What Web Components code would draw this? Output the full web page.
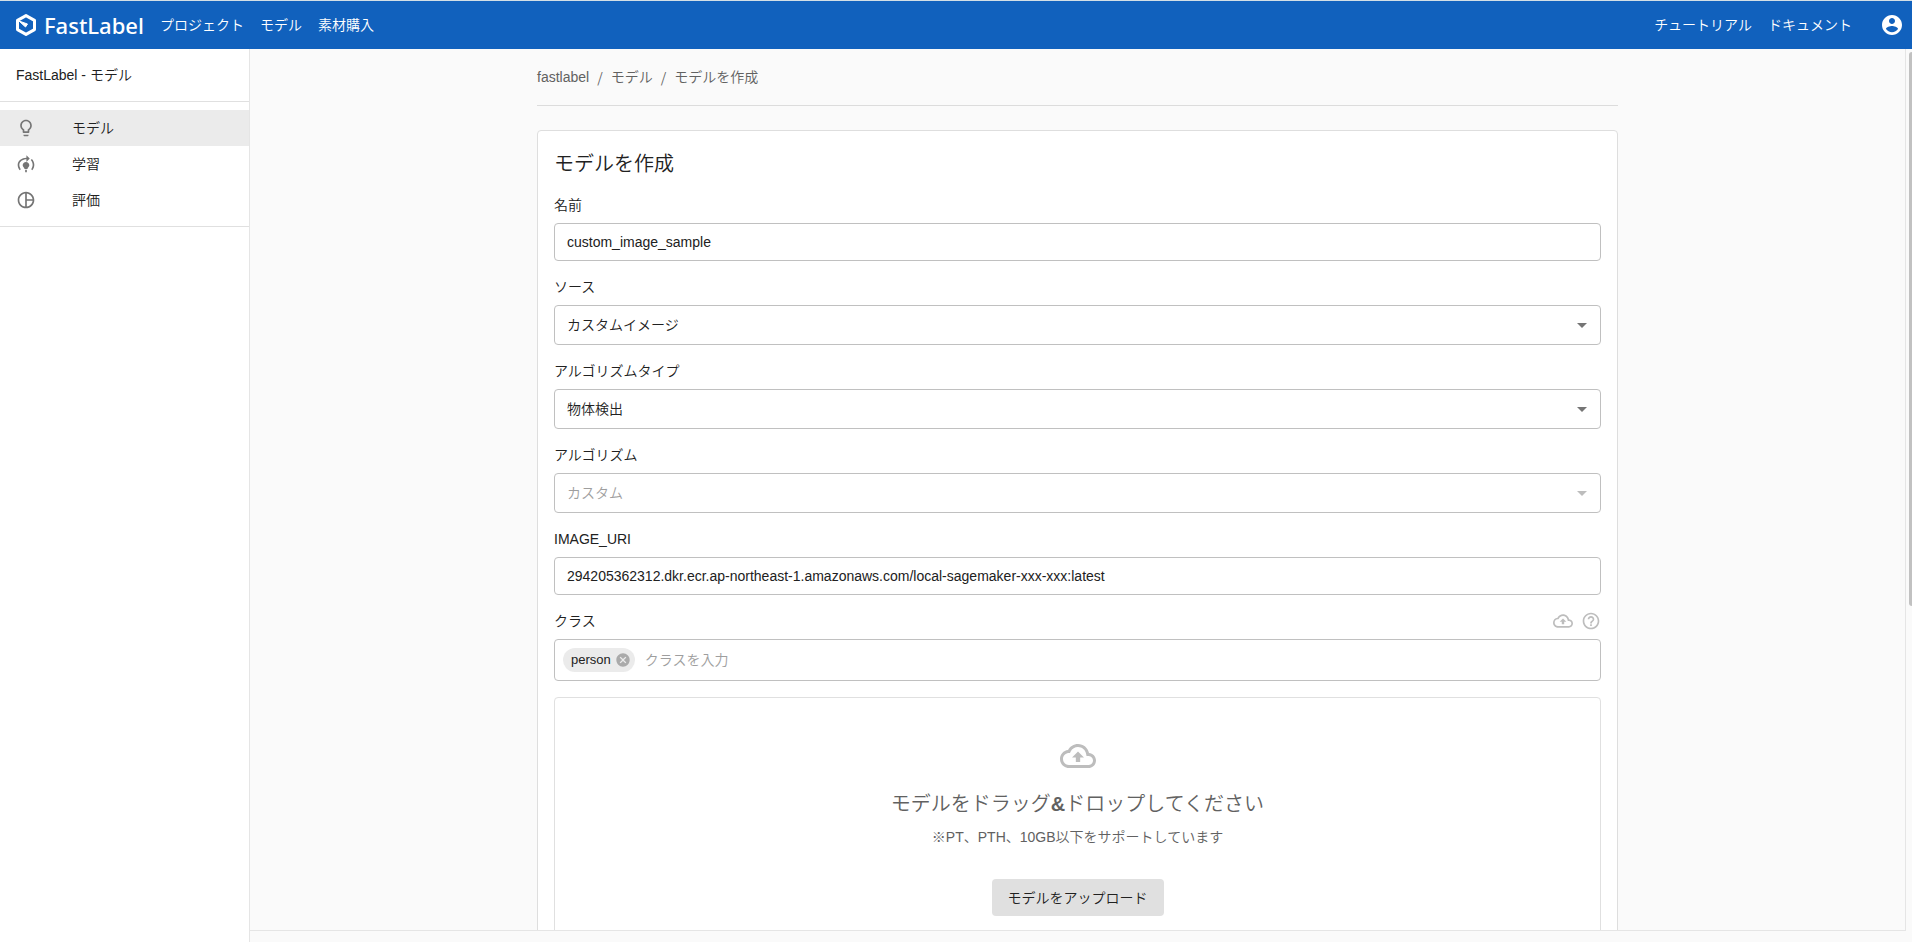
<!DOCTYPE html>
<html lang="ja">
<head>
<meta charset="utf-8">
<title>FastLabel - モデル</title>
<style>
html, body { height: 100%; margin: 0; }
body {
  background: #fafafa;
  color: #212121;
  font: 350 14px/20px "Liberation Sans", "Noto Sans CJK JP", sans-serif;
  overflow: hidden;
}
</style>
</head>
<body>
<fl-app></fl-app>
<script>
const define = (name, html, setup) => {
  const template = document.createElement('template');
  template.innerHTML = html;
  customElements.define(name, class extends HTMLElement {
    connectedCallback() {
      if (this.shadowRoot) return;
      this.attachShadow({ mode: 'open' }).append(template.content.cloneNode(true));
      if (setup) setup(this, this.shadowRoot);
    }
  });
};

const ICONS = {
  bulb: 'M9 21c0 .55.45 1 1 1h4c.55 0 1-.45 1-1v-1H9v1zm3-19C8.14 2 5 5.14 5 9c0 2.38 1.19 4.47 3 5.74V17c0 .55.45 1 1 1h6c.55 0 1-.45 1-1v-2.26c1.81-1.27 3-3.36 3-5.74 0-3.86-3.14-7-7-7zm2.85 11.1l-.85.6V16h-4v-2.3l-.85-.6C7.8 12.16 7 10.63 7 9c0-2.76 2.24-5 5-5s5 2.24 5 5c0 1.63-.8 3.16-2.15 4.1z',
  training: 'M16 13.500c0 2-2.200 3-2.200 4.500h-3.600c0-1.500-2.200-2.500-2.200-4.500 0-2.210 1.790-4 4-4s4 1.790 4 4zm-3 5.500h-2v3h2v-3zm7-6c0 2-.700 3.800-1.800 5.200l1.400 1.400c1.500-1.800 2.400-4.100 2.400-6.600 0-2.800-1.100-5.300-2.900-7.100l-1.400 1.400C19.100 8.800 20 10.800 20 13zM16.500 5.500l-4-4v3C7 4.500 2 8.200 2 13c0 2.500.900 4.800 2.400 6.600l1.400-1.400C4.700 16.800 4 15 4 13c0-3.900 4-6.700 8.500-6.700v3.200l4-4z',
  pie: 'M12 2C6.480 2 2 6.480 2 12s4.480 10 10 10 10-4.480 10-10S17.520 2 12 2zm1 2.070c3.610.450 6.480 3.330 6.930 6.930H13V4.070zM4 12c0-4.060 3.070-7.440 7-7.930v15.870c-3.930-.500-7-3.880-7-7.940zm9 7.930V13h6.930c-.450 3.610-3.320 6.480-6.930 6.930z',
  cloud: 'M19.350 10.040C18.670 6.590 15.640 4 12 4 9.110 4 6.600 5.640 5.350 8.040 2.340 8.360 0 10.910 0 14c0 3.310 2.690 6 6 6h13c2.760 0 5-2.240 5-5 0-2.640-2.050-4.780-4.650-4.960zM19 18H6c-2.210 0-4-1.790-4-4 0-2.050 1.530-3.760 3.560-3.970l1.070-.110.500-.950C8.080 7.140 9.940 6 12 6c2.620 0 4.880 1.860 5.390 4.430l.300 1.500 1.530.110c1.560.100 2.780 1.410 2.780 2.960 0 1.650-1.350 3-3 3zM8 13h2.550v3h2.900v-3H16l-4-4z',
  help: 'M11 18h2v-2h-2v2zm1-16C6.480 2 2 6.480 2 12s4.480 10 10 10 10-4.480 10-10S17.520 2 12 2zm0 18c-4.410 0-8-3.590-8-8s3.590-8 8-8 8 3.590 8 8-3.590 8-8 8zm0-14c-2.210 0-4 1.790-4 4h2c0-1.100.900-2 2-2s2 .900 2 2c0 2-3 1.750-3 5h2c0-2.250 3-2.500 3-5 0-2.210-1.790-4-4-4z',
  cancel: 'M12 2C6.470 2 2 6.470 2 12s4.470 10 10 10 10-4.470 10-10S17.530 2 12 2zm5 13.590L15.590 17 12 13.410 8.410 17 7 15.590 10.590 12 7 8.410 8.410 7 12 10.590 15.590 7 17 8.410 13.410 12 17 15.590z',
  account: 'M12 2C6.480 2 2 6.480 2 12s4.480 10 10 10 10-4.480 10-10S17.520 2 12 2zm0 3c1.660 0 3 1.340 3 3s-1.340 3-3 3-3-1.340-3-3 1.340-3 3-3zm0 14.200c-2.500 0-4.710-1.280-6-3.220.030-1.990 4-3.080 6-3.080 1.990 0 5.970 1.090 6 3.080-1.290 1.940-3.500 3.220-6 3.220z',
  arrow: 'M7 10l5 5 5-5z'
};

define('fl-icon', `
<style>
:host { display: block; flex: none; width: var(--size, 20px); height: var(--size, 20px); }
svg { display: block; width: 100%; height: 100%; fill: currentColor; }
</style>
<svg viewBox="0 0 24 24" aria-hidden="true"><path/></svg>`,
(host, root) => root.querySelector('path').setAttribute('d', ICONS[host.getAttribute('name')]));

define('fl-header', `
<style>
:host {
  display: flex; align-items: center; box-sizing: border-box; height: 49px; flex: none;
  padding: 0 8px 0 14px; background: #1161bd; border-top: 1px solid #d3dfe6; color: #fff;
}
.brand { display: flex; align-items: center; gap: 6px; width: 146px; color: #fff; text-decoration: none;
  font: 500 22px/24px "Noto Sans", sans-serif; }
.brand svg { width: 24px; height: 24px; flex: none; }
nav { display: flex; gap: 16px; }
nav a { color: #fff; text-decoration: none; }
.right { margin-left: auto; margin-right: 28px; }
button { all: unset; --size: 24px; cursor: pointer; }
</style>
<a class="brand" href="#" aria-label="FastLabel">
  <svg viewBox="0 0 24 24" fill="none" stroke="#fff"><path stroke-width="3" stroke-linejoin="round" d="M12 2.600l8.500 4.800v9.200L12 21.400l-8.500-4.800V7.400z"/><path fill="#fff" stroke-width="1" stroke-linejoin="round" d="M5 8l8.500 3-2 3z"/></svg>
  <span>FastLabel</span>
</a>
<nav><a href="#">プロジェクト</a><a href="#">モデル</a><a href="#">素材購入</a></nav>
<nav class="right"><a href="#">チュートリアル</a><a href="#">ドキュメント</a></nav>
<button aria-label="アカウント"><fl-icon name="account"></fl-icon></button>`);

define('fl-nav-item', `
<style>
:host { display: block; }
a { display: flex; align-items: center; gap: 36px; height: 36px; padding: 0 16px; color: #212121; text-decoration: none; }
:host([selected]) a { background: #ebebeb; }
fl-icon { color: #757575; }
</style>
<a href="#"><fl-icon></fl-icon><slot></slot></a>`,
(host, root) => {
  const old = root.querySelector('fl-icon'), icon = document.createElement('fl-icon');
  icon.setAttribute('name', host.getAttribute('icon'));
  old.replaceWith(icon);
});

define('fl-sidebar', `
<style>
:host { display: block; box-sizing: border-box; width: 250px; flex: none; background: #fff; border-right: 1px solid #e5e5e5; }
header { padding: 16px; border-bottom: 1px solid #e0e0e0; }
nav { padding: 8px 0; border-bottom: 1px solid #e0e0e0; }
</style>
<header><slot name="title"></slot></header>
<nav><slot></slot></nav>`);

define('fl-breadcrumb', `
<style>
:host { display: block; padding: 16px 0; border-bottom: 1px solid #dcdcdc; color: #616161; }
nav { display: flex; gap: 8px; line-height: 24px; }
a { color: inherit; text-decoration: none; }
i { font-style: normal; font-family: "Noto Sans CJK JP", sans-serif; }
</style>
<nav aria-label="パンくず"><a href="#">fastlabel</a><i>/</i><a href="#">モデル</a><i>/</i><span>モデルを作成</span></nav>`);

const FIELD = `
:host { display: block; }
label { display: block; margin-bottom: 8px; }
.box { box-sizing: border-box; width: 100%; border: 1px solid #c0c0c0; border-radius: 4px; background: #fff; }
input, select { font: inherit; color: inherit; outline: none; margin: 0; }
`;

define('fl-text-field', `
<style>${FIELD}
input { display: block; height: 38px; padding: 0 12px; }
</style>
<label for="control"></label>
<input id="control" class="box" type="text">`,
(host, root) => {
  root.querySelector('label').textContent = host.getAttribute('label');
  root.querySelector('input').value = host.getAttribute('value');
});

define('fl-select-field', `
<style>${FIELD}
.wrap { display: grid; align-items: center; }
.wrap > * { grid-area: 1 / 1; }
select { appearance: none; height: 40px; padding: 0 32px 0 12px; }
select:disabled { color: #9e9e9e; opacity: 1; }
fl-icon { --size: 24px; justify-self: end; margin-right: 7px; color: #757575; pointer-events: none; }
:host([disabled]) fl-icon { color: #bdbdbd; }
</style>
<label for="control"></label>
<div class="wrap"><select id="control" class="box"><option></option></select><fl-icon name="arrow"></fl-icon></div>`,
(host, root) => {
  root.querySelector('label').textContent = host.getAttribute('label');
  root.querySelector('option').textContent = host.getAttribute('value');
  root.querySelector('select').disabled = host.hasAttribute('disabled');
});

define('fl-chip', `
<style>
:host { display: flex; align-items: center; gap: 4px; height: 24px; padding: 0 4px 0 8px; border-radius: 12px; background: #ebebeb; font-size: 13px; }
button { all: unset; --size: 16px; color: #aaa; cursor: pointer; }
</style>
<slot></slot><button aria-label="削除"><fl-icon name="cancel"></fl-icon></button>`);

define('fl-class-field', `
<style>${FIELD}
.head { display: flex; align-items: center; gap: 8px; margin-bottom: 8px; color: #bdbdbd; }
label { margin: 0 auto 0 0; color: #212121; }
.head button { all: unset; cursor: pointer; }
.box { display: flex; align-items: center; gap: 10px; padding: 8px; }
input { flex: 1; min-width: 0; height: 24px; padding: 0; border: 0; background: none; }
input::placeholder { color: #9e9e9e; opacity: 1; }
</style>
<div class="head"><label for="control">クラス</label>
<button aria-label="アップロード"><fl-icon name="cloud"></fl-icon></button>
<button aria-label="ヘルプ"><fl-icon name="help"></fl-icon></button></div>
<div class="box"><fl-chip>person</fl-chip><input id="control" type="text" placeholder="クラスを入力"></div>`);

define('fl-dropzone', `
<style>
:host { display: flex; flex-direction: column; align-items: center; padding: 40px 16px; border: 1px solid #e0e0e0; border-radius: 4px; color: #616161; }
fl-icon { --size: 36px; color: #bdbdbd; }
h2 { margin: 14px 0 7px; font-size: 20px; line-height: 32px; font-weight: 350; }
b { font-weight: 700; }
p { margin: 0 0 32px; }
button { height: 37px; padding: 0 16px; border: 0; border-radius: 4px; background: #e0e0e0; color: #212121; font: inherit; cursor: pointer; }
</style>
<fl-icon name="cloud"></fl-icon>
<h2>モデルをドラッグ<b>&amp;</b>ドロップしてください</h2>
<p>※PT、PTH、10GB以下をサポートしています</p>
<button>モデルをアップロード</button>`);

define('fl-card', `
<style>
:host { display: flex; flex-direction: column; gap: 16px; margin-top: 24px; padding: 18px 16px 16px; border: 1px solid #dedede; border-radius: 4px; background: #fff; }
h1 { margin: 0; font-size: 20px; line-height: 30px; font-weight: 350; }
</style>
<h1><slot name="title"></slot></h1><slot></slot>`);

define('fl-scrollbar', `
<style>
:host { display: flex; justify-content: flex-end; width: 6px; flex: none; }
div { width: 3px; height: 62%; margin-top: 3px; background: #c1c1c1; border-radius: 3px 0 0 3px; }
</style>
<div></div>`);

define('fl-app', `
<style>
:host { display: flex; flex-direction: column; height: 100vh; }
.body { display: flex; flex: 1; min-height: 0; }
main { flex: 1; min-width: 0; margin-bottom: 11px; border: solid #e5e5e5; border-width: 0 1px 1px 0; overflow: hidden; }
.content { max-width: 1081px; margin: 0 auto; }
</style>
<fl-header></fl-header>
<div class="body">
  <fl-sidebar>
    <span slot="title">FastLabel - モデル</span>
    <fl-nav-item icon="bulb" selected>モデル</fl-nav-item>
    <fl-nav-item icon="training">学習</fl-nav-item>
    <fl-nav-item icon="pie">評価</fl-nav-item>
  </fl-sidebar>
  <main><div class="content">
    <fl-breadcrumb></fl-breadcrumb>
    <fl-card>
      <span slot="title">モデルを作成</span>
      <fl-text-field label="名前" value="custom_image_sample"></fl-text-field>
      <fl-select-field label="ソース" value="カスタムイメージ"></fl-select-field>
      <fl-select-field label="アルゴリズムタイプ" value="物体検出"></fl-select-field>
      <fl-select-field label="アルゴリズム" value="カスタム" disabled></fl-select-field>
      <fl-text-field label="IMAGE_URI" value="294205362312.dkr.ecr.ap-northeast-1.amazonaws.com/local-sagemaker-xxx-xxx:latest"></fl-text-field>
      <fl-class-field></fl-class-field>
      <fl-dropzone></fl-dropzone>
    </fl-card>
  </div></main>
  <fl-scrollbar></fl-scrollbar>
</div>`);
</script>
</body>
</html>
